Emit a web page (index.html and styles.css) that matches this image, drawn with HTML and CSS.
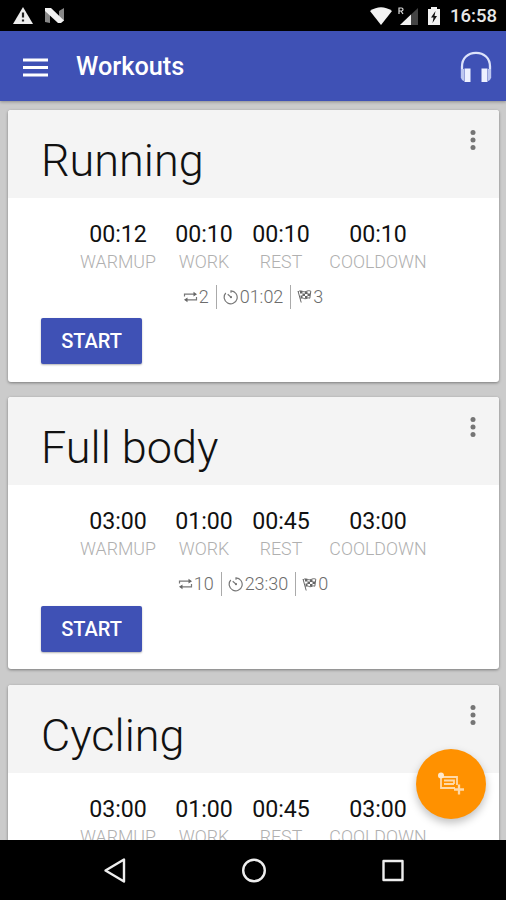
FILE: index.html
```html
<!DOCTYPE html>
<html lang="en">
<head>
<meta charset="utf-8">
<title>Workouts</title>
<link rel="stylesheet" href="styles.css">
</head>
<body>
<svg width="0" height="0" class="defs">
  <symbol id="repeat" viewBox="0 0 15 12"><path d="M1.500 5.500V3.200h10.500M13.500 6v2.800H3" fill="none" stroke="#777" stroke-width="1.200"/><path d="M10.500.8L14 3.200l-3.500 2.400zM4.500 6.400L1 8.800l3.500 2.400z" fill="#666"/></symbol>
  <symbol id="timer" viewBox="0 0 16 16"><path d="M8 1.8A6.500 6.500 0 1 1 2.800 4M8 1.300v2.500M4.700 5.200L8.300 8.400" fill="none" stroke="#777" stroke-width="1.200"/><circle cx="8" cy="8.200" r="1.100" fill="#777"/></symbol>
  <symbol id="flag" viewBox="0 0 15 15"><path d="M1 2l3.200 11.500M1.300 2.600c3-2.200 5 1.400 8-.2 1.600-.9 3-.9 4.500-.2l-1 7c-2-1-3.200.9-5 .5C6 9.200 5 8.500 3.400 9.700" fill="none" stroke="#666" stroke-width="1"/><path d="M3 2h2.500v2.500H3zM8 2.500h2.500V5H8zM5.500 4.500H8V7H5.500zM10.500 4.500H13V7h-2.500zM3.500 6.500h2V9h-2zM8 7h2.500v2H8z" fill="#666"/></symbol>
  <symbol id="more" viewBox="0 0 6 22"><g fill="#757575"><circle cx="3" cy="3.500" r="2.500"/><circle cx="3" cy="11" r="2.500"/><circle cx="3" cy="18.500" r="2.500"/></g></symbol>
</svg>
<div class="screen">
  <div class="status">
    <svg class="alerts" width="52" height="18" viewBox="0 0 52 18"><path d="M10 0L20 17H0z" fill="#eee"/><path d="M10 5.500v5M10 12.500v2" stroke="#222" stroke-width="2.200"/><path d="M32 2l5 3v11l-5-1zM46 4l5-3v13l-5-3z" fill="#888"/><path d="M32 1h6l13 12.500-3 2.500h-3L32 4z" fill="#f2f2f2"/></svg>
    <svg class="signals" width="72" height="20" viewBox="0 0 72 20"><path d="M0 5Q11-2.500 22 5L11 19z" fill="#f2f2f2"/><path d="M48 2v17H30z" fill="#444"/><path d="M41 8.500V19H30z" fill="#f2f2f2"/><path d="M29 8V2h2.500q1.500 0 1.500 1.500T31.500 5H29m2 0l2 3" fill="none" stroke="#ddd" stroke-width="1.200"/><path d="M58 3h3V1h6v2h3v16H58z" fill="#f2f2f2"/><path d="M65.500 5L61 11.500h2.500L62.500 17l4.500-7h-2.500z" fill="#111"/></svg>
    <span class="clock">16:58</span>
  </div>
  <header class="appbar">
    <svg width="25" height="19" viewBox="0 0 25 19"><path d="M0 2h25M0 9.500h25M0 17h25" stroke="#fff" stroke-width="2.800"/></svg>
    <h1>Workouts</h1>
    <svg class="phones" width="32" height="32" viewBox="0 0 32 32"><path d="M2 27V15.500C2 7 8 1.800 16 1.800S30 7 30 15.500V27" fill="none" stroke="#dce2fa" stroke-width="2.300"/><path d="M1 18h3v12q-3-1-3-4zM31 18h-3v12q3-1 3-4z" fill="#bdc7f0"/><path d="M4.500 17.500h6V31h-6zM21.500 17.500h6V31h-6z" fill="#eef1ff"/></svg>
  </header>
  <main class="list">
    <article class="card">
      <div class="head"><h2>Running</h2><svg class="more" width="6" height="22"><use href="#more"/></svg></div>
      <div class="times">
        <div><b>00:12</b><span>WARMUP</span></div><div><b>00:10</b><span>WORK</span></div><div><b>00:10</b><span>REST</span></div><div><b>00:10</b><span>COOLDOWN</span></div>
      </div>
      <div class="stats">
        <span><svg width="15" height="12"><use href="#repeat"/></svg>2</span><span><svg width="16" height="16"><use href="#timer"/></svg>01:02</span><span><svg width="15" height="15"><use href="#flag"/></svg>3</span>
      </div>
      <button>START</button>
    </article>
    <article class="card">
      <div class="head"><h2>Full body</h2><svg class="more" width="6" height="22"><use href="#more"/></svg></div>
      <div class="times">
        <div><b>03:00</b><span>WARMUP</span></div><div><b>01:00</b><span>WORK</span></div><div><b>00:45</b><span>REST</span></div><div><b>03:00</b><span>COOLDOWN</span></div>
      </div>
      <div class="stats">
        <span><svg width="15" height="12"><use href="#repeat"/></svg>10</span><span><svg width="16" height="16"><use href="#timer"/></svg>23:30</span><span><svg width="15" height="15"><use href="#flag"/></svg>0</span>
      </div>
      <button>START</button>
    </article>
    <article class="card">
      <div class="head"><h2>Cycling</h2><svg class="more" width="6" height="22"><use href="#more"/></svg></div>
      <div class="times">
        <div><b>03:00</b><span>WARMUP</span></div><div><b>01:00</b><span>WORK</span></div><div><b>00:45</b><span>REST</span></div><div><b>03:00</b><span>COOLDOWN</span></div>
      </div>
    </article>
  </main>
  <nav class="nav">
    <svg width="506" height="60" viewBox="0 0 506 60"><g fill="none" stroke="#eee" stroke-width="2.400" stroke-linejoin="round"><path d="M105.500 30.500L124 19.500v22z"/><circle cx="254" cy="30.500" r="10.800"/><path d="M383.500 21h19v19h-19z"/></g></svg>
  </nav>
  <div class="fab"><svg width="28" height="26" viewBox="0 0 28 26"><g fill="none" stroke="#ffd9a8" stroke-width="1.800"><path d="M18 17H4V6h16v8M7 9.500h10v3.500M7 13h10"/><path d="M22 13.500v10M17 18.500h10" stroke-width="2.300"/></g><circle cx="4" cy="4.500" r="3" fill="#ffe9cc"/></svg></div>
</div>
</body>
</html>
```
FILE: styles.css
```css
* { box-sizing: border-box; }
body { margin: 0; font-family: Roboto, sans-serif; }
h1, h2 { margin: 0; }
svg { display: block; flex: none; }
.defs { position: absolute; }
.screen { position: relative; width: 506px; height: 900px; overflow: hidden; display: flex; flex-direction: column; background: #cbcbcb; }
.status { height: 31px; flex: none; background: #000; display: flex; align-items: center; padding: 1px 9px 0 13px; }
.signals { margin-left: auto; }
.clock { width: 47px; margin-left: 8px; font-size: 18.500px; font-weight: 500; line-height: 30px; color: #e8e8e8; white-space: nowrap; }
.appbar { height: 70px; flex: none; background: #3f51b5; display: flex; align-items: center; padding: 2px 14px 0 23px; box-shadow: 0 1px 3px rgba(0, 0, 0, .3); z-index: 1; }
.appbar h1 { margin-left: 28px; font-size: 25.300px; font-weight: 500; line-height: 34px; color: #fff; }
.phones { margin-left: auto; }
.list { height: 739px; flex: none; overflow: hidden; padding: 8.500px 7px 0 8px; display: flex; flex-direction: column; gap: 15.500px; }
.card { height: 272px; flex: none; background: #fff; border-radius: 3px; box-shadow: 0 1px 3px rgba(0, 0, 0, .4); display: flex; flex-direction: column; overflow: hidden; }
.head { height: 88px; flex: none; background: #f4f4f4; display: flex; justify-content: space-between; padding: 19px 23px 0 33px; }
.head h2 { font-size: 45px; font-weight: 300; line-height: 64px; color: #111; }
.times { display: flex; justify-content: center; gap: 19px; padding-top: 22px; }
.times div { width: 58px; display: flex; flex-direction: column; align-items: center; }
.times div:first-child { width: 76px; }
.times div:last-child { width: 98px; }
.times b { font-size: 23.200px; font-weight: 400; line-height: 28px; color: #111; }
.times span { font-size: 17.800px; font-weight: 300; line-height: 27px; color: #b0b0b0; }
.stats { display: flex; justify-content: center; height: 24px; margin-top: 10px; }
.stats span { display: flex; align-items: center; gap: 1px; padding: 0 7px 0 6px; font-size: 18px; line-height: 24px; color: #6c6c6c; font-weight: 300; }
.stats span + span { border-left: 1px solid #aaa; }
.card button { width: 101px; height: 46px; margin: 9.500px 0 0 33px; padding: 0; border: 0; border-radius: 2px; background: #3f51b5; box-shadow: 0 1px 2px rgba(0, 0, 0, .3); color: #fff; font: 500 20px/46px Roboto, sans-serif; flex: none; }
.nav { height: 60px; flex: none; background: #000; }
.fab { position: absolute; left: 416px; top: 749px; width: 70px; height: 70px; border-radius: 50%; background: #ff9100; box-shadow: 0 4px 8px rgba(0, 0, 0, .25); display: flex; align-items: center; justify-content: center; }
```
